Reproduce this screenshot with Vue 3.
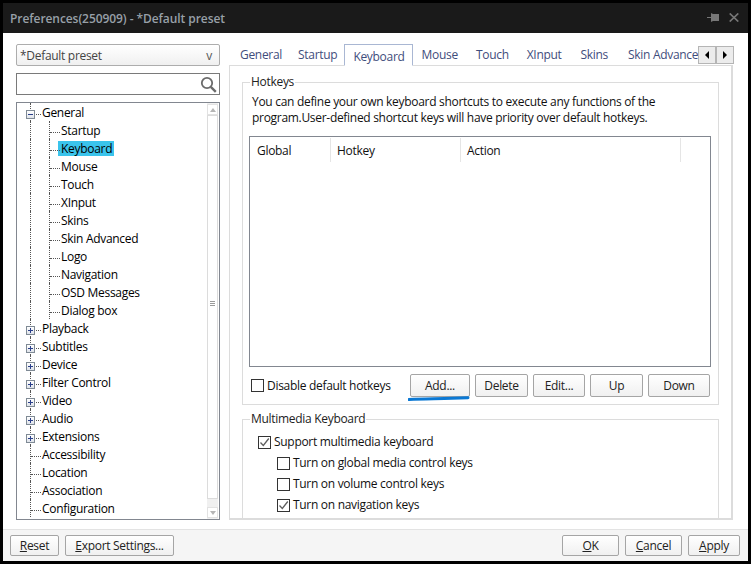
<script setup>
const tree = [
  { label: 'General', level: 1, box: '-' },
  { label: 'Startup', level: 2 },
  { label: 'Keyboard', level: 2, marked: true },
  { label: 'Mouse', level: 2 },
  { label: 'Touch', level: 2 },
  { label: 'XInput', level: 2 },
  { label: 'Skins', level: 2 },
  { label: 'Skin Advanced', level: 2 },
  { label: 'Logo', level: 2 },
  { label: 'Navigation', level: 2 },
  { label: 'OSD Messages', level: 2 },
  { label: 'Dialog box', level: 2 },
  { label: 'Playback', level: 1, box: '+' },
  { label: 'Subtitles', level: 1, box: '+' },
  { label: 'Device', level: 1, box: '+' },
  { label: 'Filter Control', level: 1, box: '+' },
  { label: 'Video', level: 1, box: '+' },
  { label: 'Audio', level: 1, box: '+' },
  { label: 'Extensions', level: 1, box: '+' },
  { label: 'Accessibility', level: 1 },
  { label: 'Location', level: 1 },
  { label: 'Association', level: 1 },
  { label: 'Configuration', level: 1 }
]

const tabs = ['General', 'Startup', 'Keyboard', 'Mouse', 'Touch', 'XInput', 'Skins', 'Skin Advanced']

const columns = [
  { label: 'Global', width: 81 },
  { label: 'Hotkey', width: 130 },
  { label: 'Action', width: 220 }
]

const listButtons = [
  { label: 'Add...', width: 60 },
  { label: 'Delete', width: 53 },
  { label: 'Edit...', width: 52 },
  { label: 'Up', width: 53 },
  { label: 'Down', width: 62 }
]

const mediaKeys = [
  { label: 'Turn on global media control keys', checked: false },
  { label: 'Turn on volume control keys', checked: false },
  { label: 'Turn on navigation keys', checked: true }
]
</script>

<template>
  <div class="window">
    <header class="titlebar">
      <span class="title">Preferences(250909) - *Default preset</span>
      <svg class="pin" width="12" height="9" viewBox="0 0 12 9">
        <path d="M0 4.500h5" stroke="#777" stroke-width="1" fill="none" />
        <path d="M4 0L6 1H12V8H6L4 9Z" fill="#777" />
      </svg>
      <svg class="close" width="10" height="9" viewBox="0 0 10 9">
        <path d="M.7.5l8.600 8M9.300.5L.7 8.500" stroke="#777" stroke-width="1.700" fill="none" />
      </svg>
    </header>

    <main class="body">
      <aside class="left">
        <div class="combo">
          <span>*Default preset</span>
          <span class="combo-arrow">v</span>
        </div>
        <div class="search">
          <svg width="17" height="17" viewBox="0 0 17 17">
            <circle cx="7" cy="7" r="5.200" fill="none" stroke="#6b6b6b" stroke-width="1.800" />
            <path d="M10.800 10.800l5 5" stroke="#6b6b6b" stroke-width="2.400" />
          </svg>
        </div>
        <div class="tree">
          <ul class="tree-list">
            <li v-for="item in tree" :key="item.label" class="row">
              <span class="trunk" :class="{ deep: item.level === 2, link: item.level === 1 }">
                <span v-if="item.box" class="box">
                  <i class="dash"></i>
                  <i v-if="item.box === '+'" class="bar"></i>
                </span>
              </span>
              <span v-if="item.level === 2" class="branch link"></span>
              <span class="label" :class="{ marked: item.marked }">{{ item.label }}</span>
            </li>
          </ul>
          <div class="scrollbar">
            <span class="sb-btn"><i class="up"></i></span>
            <span class="sb-thumb"><i class="grip"></i></span>
            <span class="sb-btn end"><i class="down"></i></span>
          </div>
        </div>
      </aside>

      <section class="right">
        <div class="tabbar">
          <div class="tabs">
            <span v-for="t in tabs" :key="t" class="tab" :class="{ active: t === 'Keyboard' }">{{ t }}</span>
          </div>
          <div class="tab-arrows">
            <span class="tab-arrow"><i class="left-tri"></i></span>
            <span class="tab-arrow"><i class="right-tri"></i></span>
          </div>
        </div>

        <div class="panel">
          <fieldset class="group hotkeys">
            <legend>Hotkeys</legend>
            <p class="desc">
              You can define your own keyboard shortcuts to execute any functions of the<br />
              program.User-defined shortcut keys will have priority over default hotkeys.
            </p>
            <div class="list">
              <div class="list-head">
                <span v-for="c in columns" :key="c.label" class="col" :style="{ width: c.width + 'px' }">{{ c.label }}</span>
              </div>
            </div>
            <div class="list-actions">
              <label class="check">
                <span class="checkbox"></span>
                Disable default hotkeys
              </label>
              <div class="list-buttons">
                <button v-for="b in listButtons" :key="b.label" class="btn" :style="{ width: b.width + 'px' }">{{ b.label }}</button>
                <svg class="scribble" width="62" height="7" viewBox="0 0 62 7">
                  <path d="M1 4.500C14 3.500 28 3.800 44 3.200L60 2.800" fill="none" stroke="#0a78d4" stroke-width="3" stroke-linecap="round" />
                </svg>
              </div>
            </div>
          </fieldset>

          <fieldset class="group media">
            <legend>Multimedia Keyboard</legend>
            <label class="check">
              <span class="checkbox">
                <svg width="11" height="11" viewBox="0 0 11 11"><path d="M1.500 5.500l2.800 3 5.500-7" fill="none" stroke="#5f5f5f" stroke-width="1.300" /></svg>
              </span>
              Support multimedia keyboard
            </label>
            <div class="sub-checks">
              <label v-for="k in mediaKeys" :key="k.label" class="check">
                <span class="checkbox">
                  <svg v-if="k.checked" width="11" height="11" viewBox="0 0 11 11"><path d="M1.500 5.500l2.800 3 5.500-7" fill="none" stroke="#5f5f5f" stroke-width="1.300" /></svg>
                </span>
                {{ k.label }}
              </label>
            </div>
          </fieldset>
        </div>
      </section>
    </main>

    <footer class="footer">
      <button class="btn reset"><u>R</u>eset</button>
      <button class="btn export"><u>E</u>xport Settings...</button>
      <span class="spacer"></span>
      <button class="btn ok"><u>O</u>K</button>
      <button class="btn cancel"><u>C</u>ancel</button>
      <button class="btn apply"><u>A</u>pply</button>
    </footer>
  </div>
</template>

<style>
html,
body {
  margin: 0;
  background: #000;
}
</style>

<style scoped>
.window {
  width: 745px;
  height: 558px;
  margin: 3px 0 0 3px;
  display: flex;
  flex-direction: column;
  background: #fff;
  font-family: "Open Sans", "Noto Sans", sans-serif;
  font-size: 12px;
  letter-spacing: -0.3px;
  color: #111;
  overflow: hidden;
}
.titlebar {
  height: 30px;
  flex: none;
  background: #1a1a1a;
  display: flex;
  align-items: center;
  padding: 0 9px 2px 7px;
  box-sizing: border-box;
}
.title {
  flex: 1;
  color: #98a0a8;
  font-weight: 600;
  font-size: 12px;
  letter-spacing: -0.07px;
  margin-bottom: -2px;
}
.close {
  margin-left: 10px;
}
.body {
  flex: 1;
  display: flex;
  min-height: 0;
  padding: 11px 15px 9px 13px;
  gap: 9px;
}
.left {
  width: 204px;
  flex: none;
  display: flex;
  flex-direction: column;
  gap: 7px;
}
.combo {
  height: 22px;
  box-sizing: border-box;
  border: 1px solid #adadad;
  border-radius: 2px;
  background: linear-gradient(#fff, #f0f0f0);
  display: flex;
  align-items: center;
  justify-content: space-between;
  padding: 0 7px 0 3px;
  color: #444;
}
.combo-arrow {
  color: #555;
}
.search {
  height: 22px;
  box-sizing: border-box;
  border: 1px solid #7a7a7a;
  display: flex;
  align-items: center;
  justify-content: flex-end;
  padding-right: 2px;
}
.tree {
  flex: 1;
  min-height: 0;
  box-sizing: border-box;
  border: 1px solid #828790;
  display: flex;
  overflow: hidden;
}
.tree-list {
  flex: 1;
  list-style: none;
  margin: 0;
  padding: 0 0 0 13px;
  overflow: hidden;
}
.row {
  display: flex;
  align-items: center;
  height: 18px;
}
.trunk,
.branch {
  position: relative;
  height: 18px;
  flex: none;
  box-sizing: border-box;
  border-left: 1px dotted #555;
}
.trunk {
  width: 12px;
}
.trunk.deep {
  width: 19px;
}
.branch {
  width: 12px;
}
.link::after {
  content: "";
  position: absolute;
  left: 0;
  top: 11px;
  width: 10px;
  border-top: 1px dotted #555;
}
.box {
  position: absolute;
  left: -5px;
  top: 7px;
  width: 7px;
  height: 7px;
  border: 1px solid #7f8a95;
  background: linear-gradient(#fff, #dfe3ea);
  z-index: 1;
}
.dash {
  position: absolute;
  left: 1px;
  top: 3px;
  width: 5px;
  height: 1px;
  background: #2a3f8a;
}
.bar {
  position: absolute;
  left: 3px;
  top: 1px;
  width: 1px;
  height: 5px;
  background: #2a3f8a;
}
.label {
  white-space: nowrap;
  color: #000;
}
.marked {
  background: #3ac4ec;
  margin-left: -3px;
  padding: 0 2px 0 3px;
  line-height: 15px;
}
.scrollbar {
  width: 11px;
  flex: none;
  margin-right: 1px;
  padding: 1px 0;
  display: flex;
  flex-direction: column;
  background: #f0f0f0;
}
.sb-btn {
  height: 11px;
  flex: none;
  box-sizing: border-box;
  background: #fff;
  border: 1px solid #e2e2e2;
  display: flex;
  align-items: center;
  justify-content: center;
}
.sb-btn.end {
  margin-top: 8px;
}
.up,
.down {
  width: 0;
  height: 0;
  border-left: 3px solid transparent;
  border-right: 3px solid transparent;
}
.up {
  border-bottom: 4px solid #b5b5b5;
}
.down {
  border-top: 4px solid #b5b5b5;
}
.sb-thumb {
  flex: 1;
  background: #fff;
  border: 1px solid #dcdcdc;
  display: flex;
  align-items: center;
  justify-content: center;
}
.grip {
  width: 5px;
  height: 5px;
  margin-bottom: 8px;
  background: repeating-linear-gradient(#9a9a9a 0 1px, #fff 1px 2px);
}
.right {
  flex: 1;
  min-width: 0;
  display: flex;
  flex-direction: column;
}
.tabbar {
  height: 22px;
  flex: none;
  display: flex;
  position: relative;
  z-index: 1;
  margin-right: -1px;
}
.tabs {
  width: 469px;
  display: flex;
  overflow: hidden;
}
.tab {
  padding: 2px 9px 0;
  height: 22px;
  box-sizing: border-box;
  color: #3f4d7c;
  white-space: nowrap;
  flex: none;
}
.tab:nth-child(1) {
  margin-left: 2px;
  padding-right: 7px;
}
.tab:nth-child(2) {
  padding-right: 7px;
}
.tab:nth-child(6) {
  padding-right: 10px;
}
.tab:nth-child(7) {
  padding-right: 11px;
}
.tab.active {
  border: 1px solid #a9b7d3;
  border-bottom: 1px solid #fff;
  background: #fff;
  padding: 3px 7px 0 8px;
}
.tab-arrows {
  display: flex;
  height: 18px;
  margin-top: 2px;
}
.tab-arrow {
  width: 18px;
  box-sizing: border-box;
  border: 1px solid #b5b5b5;
  background: #ececec;
  display: flex;
  align-items: center;
  justify-content: center;
}
.left-tri,
.right-tri {
  width: 0;
  height: 0;
  border-top: 4px solid transparent;
  border-bottom: 4px solid transparent;
}
.left-tri {
  border-right: 4px solid #000;
}
.right-tri {
  border-left: 4px solid #000;
}
.panel {
  flex: 1;
  min-height: 0;
  box-sizing: border-box;
  border: 1px solid #dcdcdc;
  border-right-width: 2px;
  border-bottom-width: 2px;
  margin-top: -1px;
  padding: 8px 12px 0;
  display: flex;
  flex-direction: column;
  gap: 6px;
}
.group {
  margin: 0;
  min-width: 0;
  border: 1px solid #dcdcdc;
  padding: 0 8px;
}
.group legend {
  padding: 0 1px;
  margin-left: -1px;
  line-height: 16px;
  color: #222;
}
.desc {
  margin: 4px 0 0;
  line-height: 16px;
  padding-left: 1px;
}
.hotkeys {
  height: 331px;
  box-sizing: border-box;
  flex: none;
}
.list {
  margin: 10px -1px 0 -2px;
  height: 231px;
  box-sizing: border-box;
  border: 1px solid #828790;
}
.list-head {
  display: flex;
  padding-top: 1px;
}
.col {
  box-sizing: border-box;
  height: 24px;
  padding-left: 7px;
  line-height: 25px;
  border-right: 1px solid #e5e5e5;
}
.col + .col {
  padding-left: 6px;
}
.list-actions {
  height: 36px;
  display: flex;
  align-items: center;
  justify-content: space-between;
  padding-top: 7px;
  padding-bottom: 6px;
  box-sizing: border-box;
}
.list-buttons {
  display: flex;
  gap: 5px;
  position: relative;
}
.scribble {
  position: absolute;
  left: -2px;
  top: 21px;
}
.check {
  display: flex;
  align-items: center;
  gap: 3px;
  line-height: 16px;
}
.checkbox {
  width: 13px;
  height: 13px;
  box-sizing: border-box;
  border: 1px solid #333;
  flex: none;
  display: flex;
  align-items: center;
  justify-content: center;
  background: #fff;
}
.media {
  flex: 1;
  min-height: 0;
  border-bottom: none;
  padding: 7px 15px 0;
}
.media legend {
  margin-left: -8px;
}
.sub-checks {
  margin-top: 5px;
  padding-left: 19px;
  display: flex;
  flex-direction: column;
  gap: 5px;
}
.btn {
  height: 23px;
  box-sizing: border-box;
  border: 1px solid #a5a5a5;
  border-radius: 2px;
  background: linear-gradient(#fff, #f0f0f0);
  font: inherit;
  letter-spacing: inherit;
  color: #222;
  padding: 0;
}
.footer {
  height: 32px;
  flex: none;
  box-sizing: border-box;
  background: #f5f5f5;
  border-top: 1px solid #e3e3e3;
  display: flex;
  align-items: center;
  padding: 0 8px 0 7px;
  gap: 6px;
}
.footer .btn {
  height: 21px;
}
.spacer {
  flex: 1;
}
.reset {
  width: 49px;
}
.export {
  width: 109px;
}
.ok,
.cancel {
  width: 57px;
}
.apply {
  width: 52px;
}
</style>
